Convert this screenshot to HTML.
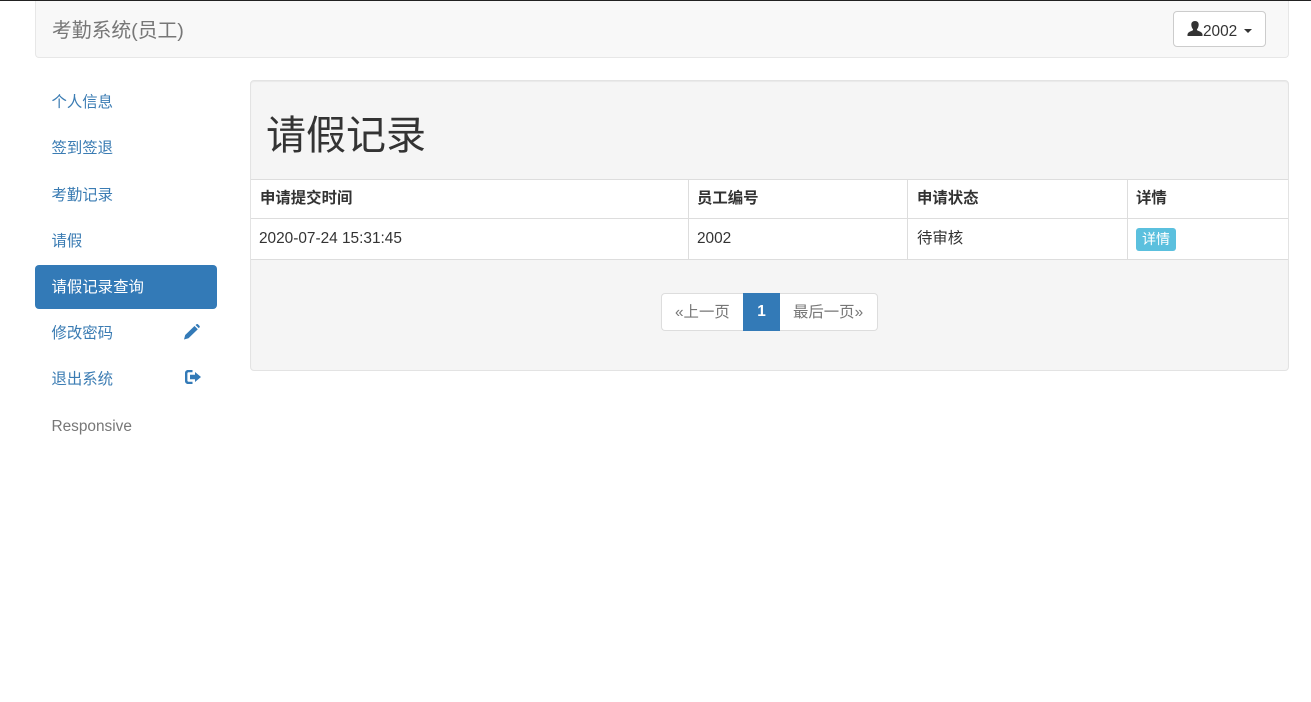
<!DOCTYPE html>
<html lang="zh">
<head>
<meta charset="utf-8">
<title>考勤系统</title>
<style>
*{box-sizing:border-box}
html,body{margin:0;padding:0;width:1311px;height:702px;overflow:hidden;background:#fff}
body{font-family:"Liberation Sans","Noto Sans CJK SC",sans-serif;font-size:15.4px;color:#333;line-height:20px;position:relative}
.abs{position:absolute;white-space:nowrap}
#top{left:0;top:0;width:1311px;height:1px;background:#222}
#nav{left:35px;top:1px;width:1254px;height:57px;background:#f8f8f8;border:1px solid #e7e7e7;border-top:0;border-radius:0 0 4px 4px}
#brand{left:52px;top:20px;font-size:19.8px;line-height:22px;color:#777}
#btn{left:1173px;top:11px;width:93px;height:36px;background:#fff;border:1px solid #ccc;border-radius:4px}
#btn .t{position:absolute;left:29px;top:10px;color:#333}
#btn svg{position:absolute;left:13px;top:9px}
#btn .c{position:absolute;left:70px;top:17px;width:0;height:0;border-top:4px solid #333;border-left:4.500px solid transparent;border-right:4.500px solid transparent}
.side{left:51.500px;color:#3b7cb3}
#act{left:35px;top:265px;width:182px;height:44px;background:#337ab7;border-radius:4px}
#panel{left:250px;top:80px;width:1039px;height:291px;background:#f5f5f5;border:1px solid #e3e3e3;border-radius:4px;box-shadow:inset 0 1px 1px rgba(0,0,0,.05)}
h1{position:absolute;margin:0;left:266px;top:110px;font-size:40px;line-height:52px;font-weight:400;color:#333;white-space:nowrap}
#tb{left:251px;top:179px;width:1037px;height:81px;background:#fff;border-top:1px solid #ddd;border-bottom:1px solid #ddd}
.h{position:absolute;left:251px;top:218px;width:1037px;height:1px;background:#ddd}
.v{position:absolute;top:180px;width:1px;height:79px;background:#ddd}
.th{font-weight:700;top:189px;color:#333}
.td{top:229px;color:#333}
#badge{left:1136px;top:228px;width:40px;height:23px;background:#5bc0de;border-radius:3px;color:#fff;text-align:center;line-height:23px;font-size:14px}
#pg1{left:661px;top:293px;width:83px;height:38px;background:#fff;border:1px solid #ddd;border-right:0;border-radius:4px 0 0 4px;color:#777;padding:9px 0 0 13px}
#pg2{left:743px;top:293px;width:37px;height:38px;background:#337ab7;color:#fff;text-align:center;padding-top:9px;font-weight:700}
#pg3{left:780px;top:293px;width:98px;height:38px;background:#fff;border:1px solid #ddd;border-left:0;border-radius:0 4px 4px 0;color:#777;padding:9px 0 0 13px}
</style>
</head>
<body>
<div class="abs" id="top"></div>
<div class="abs" id="nav"></div>
<div class="abs" id="brand">考勤系统(员工)</div>
<div class="abs" id="btn">
<svg width="16" height="16" viewBox="0 0 16 16"><path fill="#333" d="M8 0C5.700 0 4.300 1.500 4.300 3.600C4.300 5.400 5 7 5.900 8.100C6.200 8.600 6.100 9.200 5.500 9.500C4 10.300 1 10.800 .500 13.300V15H15.500V13.300C15 10.800 12 10.300 10.500 9.500C9.900 9.200 9.800 8.600 10.100 8.100C11 7 11.700 5.400 11.700 3.600C11.700 1.500 10.300 0 8 0Z"/></svg>
<span class="t">2002</span><span class="c"></span>
</div>

<div class="abs side" style="top:93px">个人信息</div>
<div class="abs side" style="top:139px">签到签退</div>
<div class="abs side" style="top:186px">考勤记录</div>
<div class="abs side" style="top:232px">请假</div>
<div class="abs" id="act"></div>
<div class="abs side" style="top:278px;color:#fff">请假记录查询</div>
<div class="abs side" style="top:324px">修改密码</div>
<svg class="abs" style="left:184px;top:324px" width="17" height="16" viewBox="0 0 17 16"><path fill="#337ab7" d="M0 15.500L1.200 11L10.500 2L13.800 5.300L4.500 14.300ZM11.500 1L12.500 .2C13-.1 13.500-.1 13.900 .3L15.500 1.900C15.900 2.300 15.900 2.800 15.600 3.300L14.800 4.300Z"/></svg>
<div class="abs side" style="top:370px">退出系统</div>
<svg class="abs" style="left:185px;top:370px" width="17" height="14" viewBox="0 0 17 14"><path fill="#337ab7" d="M3 0H7.500V2.300H3.500C2.900 2.300 2.400 2.800 2.400 3.400V10.600C2.400 11.200 2.900 11.700 3.500 11.700H7.500V14H3C1.300 14 0 12.700 0 11V3C0 1.300 1.300 0 3 0ZM10 2L16 7L10 12V9.200H5V4.800H10Z"/></svg>
<div class="abs" style="left:51.500px;top:417px;color:#777">Responsive</div>

<div class="abs" id="panel"></div>
<h1>请假记录</h1>
<div class="abs" id="tb"></div>
<div class="h"></div>
<div class="v" style="left:688px"></div>
<div class="v" style="left:907px"></div>
<div class="v" style="left:1127px"></div>
<div class="abs th" style="left:260px">申请提交时间</div>
<div class="abs th" style="left:697px">员工编号</div>
<div class="abs th" style="left:917px">申请状态</div>
<div class="abs th" style="left:1136px">详情</div>
<div class="abs td" style="left:259px">2020-07-24 15:31:45</div>
<div class="abs td" style="left:697px">2002</div>
<div class="abs td" style="left:917px">待审核</div>
<div class="abs" id="badge">详情</div>

<div class="abs" id="pg1">«上一页</div>
<div class="abs" id="pg3">最后一页»</div>
<div class="abs" id="pg2">1</div>
</body>
</html>
